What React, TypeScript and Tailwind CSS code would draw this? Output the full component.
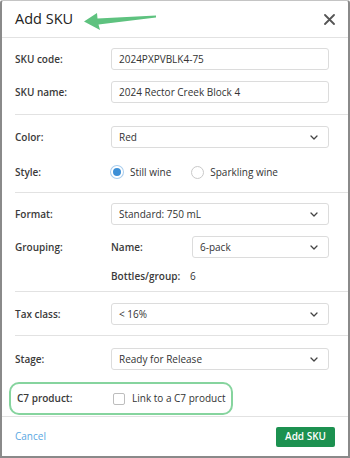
import React from "react";

const font = { fontFamily: '"Open Sans", "Noto Sans", sans-serif' };

const Chevron = () => (
  <svg width="8" height="5" viewBox="0 0 8 5" className="shrink-0">
    <path d="M1 1 L4 4 L7 1" fill="none" stroke="#444" strokeWidth="1.3" strokeLinecap="round" strokeLinejoin="round" />
  </svg>
);

const Field = ({ value, select }: { value: string; select?: boolean }) => (
  <div className="flex-1 h-[22px] border border-[#dcdcdc] rounded-[3px] bg-white flex items-center justify-between pl-[7px] pr-[10px] text-[10px] text-[#333]">
    <span>{value}</span>
    {select && <Chevron />}
  </div>
);

const Row = ({ label, children }: { label: string; children: React.ReactNode }) => (
  <div className="flex items-center h-[22px]">
    <div className="w-[96px] shrink-0 text-[10px] font-semibold text-[#3a3a3a]">{label}</div>
    <div className="flex-1 flex items-center">{children}</div>
  </div>
);

export default function App() {
  return (
    <div style={font} className="w-[350px] h-[458px] bg-white border-x-2 border-b-2 border-t border-[#8a8a8a] border-t-[#c4c4c4] rounded-t-[3px] flex flex-col overflow-hidden">
      {/* header */}
      <div className="relative h-[37px] shrink-0 border-b border-[#e2e2e2] flex items-center justify-between pl-[13px] pr-[13px]">
        <span className="text-[14.5px] text-[#222] leading-none">Add SKU</span>
        <svg width="11" height="11" viewBox="0 0 11 11">
          <path d="M1 1 L10 10 M10 1 L1 10" stroke="#555" strokeWidth="1.8" strokeLinecap="round" />
        </svg>
        <svg className="absolute left-[78px] top-[9px]" width="80" height="22" viewBox="78 9 80 22">
          <polygon points="82,20.5 95,12 95.5,17.5 154,14.5 154,16.5 96.5,23.5 98,29" fill="#5ec27f" />
        </svg>
      </div>

      <div className="flex-1 flex flex-col pl-[13px]">
        {/* codes */}
        <div className="flex flex-col gap-[11px] pt-[10px] pb-[11px] pr-[19px] border-b border-[#e2e2e2]">
          <Row label="SKU code:"><Field value="2024PXPVBLK4-75" /></Row>
          <Row label="SKU name:"><Field value="2024 Rector Creek Block 4" /></Row>
        </div>

        {/* color / style */}
        <div className="flex flex-col gap-[13px] pt-[11px] pb-[9px] pr-[19px] border-b border-[#e2e2e2]">
          <Row label="Color:"><Field value="Red" select /></Row>
          <Row label="Style:">
            <div className="flex items-center text-[10px] text-[#333]">
              <span className="w-[12px] h-[12px] rounded-full bg-[#3d8fd6] border-[2.5px] border-white ring-1 ring-[#a9cdee]" />
              <span className="ml-[7px]">Still wine</span>
              <span className="ml-[20px] w-[13px] h-[13px] rounded-full border border-[#c9c9c9] bg-white" />
              <span className="ml-[6px]">Sparkling wine</span>
            </div>
          </Row>
        </div>

        {/* format / grouping */}
        <div className="flex flex-col pt-[10px] pb-[4px] pr-[19px] border-b border-[#e2e2e2]">
          <Row label="Format:"><Field value="Standard: 750 mL" select /></Row>
          <div className="mt-[11px]">
            <Row label="Grouping:">
              <span className="w-[81px] shrink-0 text-[10px] font-semibold text-[#3a3a3a]">Name:</span>
              <Field value="6-pack" select />
            </Row>
          </div>
          <div className="mt-[7px]">
            <Row label="">
              <span className="w-[79px] shrink-0 text-[10px] font-semibold text-[#3a3a3a]">Bottles/group:</span>
              <span className="text-[10px] text-[#333]">6</span>
            </Row>
          </div>
        </div>

        {/* tax */}
        <div className="pt-[11px] pb-[10px] pr-[19px] border-b border-[#e2e2e2]">
          <Row label="Tax class:"><Field value="< 16%" select /></Row>
        </div>

        {/* stage / c7 */}
        <div className="pt-[12px] pr-[19px]">
          <Row label="Stage:"><Field value="Ready for Release" select /></Row>
          <div className="mt-[12px] -ml-[6px] w-[224px] h-[33px] rounded-[10px] border-2 border-[#86d49e] flex items-center pl-[6px]">
            <span className="w-[96px] shrink-0 text-[10px] font-semibold text-[#3a3a3a]">C7 product:</span>
            <span className="w-[12px] h-[12px] rounded-[2px] border border-[#bdbdbd] bg-white" />
            <span className="ml-[7px] text-[10px] text-[#333]">Link to a C7 product</span>
          </div>
        </div>
      </div>

      {/* footer */}
      <div className="shrink-0 h-[40px] border-t border-[#e2e2e2] flex items-center justify-between pl-[13px] pr-[13px]">
        <span className="text-[10px] text-[#5aa7e2]">Cancel</span>
        <button className="w-[59px] h-[20px] rounded-[2px] bg-[#1c9150] text-white text-[10px] font-semibold">Add SKU</button>
      </div>
    </div>
  );
}
